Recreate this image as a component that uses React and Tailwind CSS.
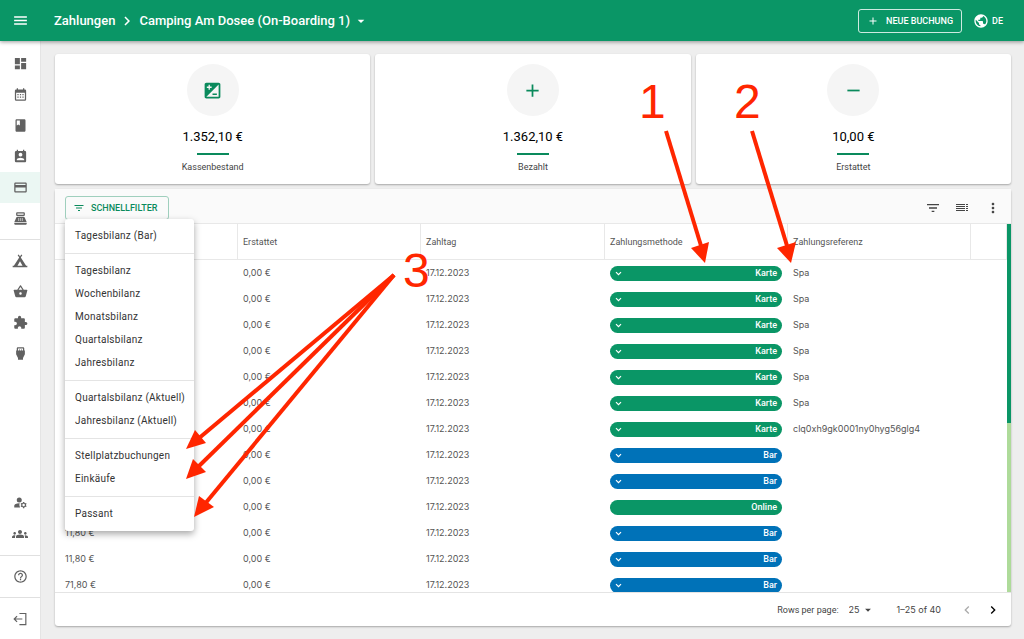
import {
  MdAdd,
  MdArrowDropDown,
  MdBook,
  MdChevronLeft,
  MdChevronRight,
  MdCreditCard,
  MdDashboard,
  MdExtension,
  MdFilterList,
  MdGroups,
  MdHelpOutline,
  MdIso,
  MdManageAccounts,
  MdMenu,
  MdMoreVert,
  MdPermContactCalendar,
  MdPointOfSale,
  MdPublic,
  MdRemove,
  MdSettingsInputHdmi,
  MdShoppingBasket,
} from "react-icons/md";
import clsx from "clsx";

function CalendarIcon({ size = 14 }) {
  return (
    <svg width={size} height={size} viewBox="0 0 24 24" fill="currentColor">
      <path d="M19 4h-1V2h-2v2H8V2H6v2H5a2 2 0 0 0-2 2v14a2 2 0 0 0 2 2h14a2 2 0 0 0 2-2V6a2 2 0 0 0-2-2Zm0 16H5V9h14v11Z" />
      <path d="M7 11h2v2H7zM11 11h2v2h-2zM15 11h2v2h-2zM7 15h2v2H7zM11 15h2v2h-2zM15 15h2v2h-2z" />
    </svg>
  );
}

function TentIcon({ size = 16 }) {
  return (
    <svg width={size} height={size} viewBox="0 0 24 24" fill="currentColor">
      <path d="m10.1 2.2 1.9 2.9 1.9-2.9 1.6 1.1-2.3 3.5L21.2 19H23v2.5H1V19h1.8l8-12.2-2.3-3.5 1.6-1.1ZM12 12.5 8.2 19h7.6L12 12.5Z" />
    </svg>
  );
}

function LogoutIcon({ size = 14 }) {
  return (
    <svg width={size} height={size} viewBox="0 0 24 24" fill="none" stroke="currentColor" strokeWidth="2">
      <path d="M11 2.5h11v19H11M16 12H2M7 7l-5 5 5 5" />
    </svg>
  );
}

function ColumnsIcon({ size = 14 }) {
  return (
    <svg width={size} height={size} viewBox="0 0 14 14" fill="currentColor">
      <path d="M1 3h9v1H1zM1 5h9v1H1zM1 7h9v1H1zM1 9h9v1H1zM11 3h2v1h-2zM11 5h2v1h-2zM11 7h2v1h-2zM11 9h2v1h-2z" />
    </svg>
  );
}

function ChevronIcon() {
  return (
    <svg width="7" height="7" viewBox="0 0 7 7" fill="none" stroke="currentColor" strokeWidth="1.2">
      <path d="m1 2.2 2.5 2.5L6 2.2" />
    </svg>
  );
}

const NAV_TOP = [
  { label: "Dashboard", icon: MdDashboard },
  { label: "Kalender", icon: CalendarIcon },
  { label: "Buchungen", icon: MdBook },
  { label: "Kontakte", icon: MdPermContactCalendar },
  { label: "Zahlungen", icon: MdCreditCard, active: true },
  { label: "Kasse", icon: MdPointOfSale },
];

const NAV_MIDDLE = [
  { label: "Stellplätze", icon: TentIcon, size: 16 },
  { label: "Artikel", icon: MdShoppingBasket },
  { label: "Erweiterungen", icon: MdExtension },
  { label: "Strom", icon: MdSettingsInputHdmi },
];

const NAV_BOTTOM = [
  { label: "Konto", icon: MdManageAccounts },
  { label: "Team", icon: MdGroups, size: 16 },
];

const STATS = [
  { label: "Kassenbestand", value: "1.352,10 €", icon: MdIso },
  { label: "Bezahlt", value: "1.362,10 €", icon: MdAdd },
  { label: "Erstattet", value: "10,00 €", icon: MdRemove },
];

const FILTER_GROUPS = [
  ["Tagesbilanz (Bar)"],
  ["Tagesbilanz", "Wochenbilanz", "Monatsbilanz", "Quartalsbilanz", "Jahresbilanz"],
  ["Quartalsbilanz (Aktuell)", "Jahresbilanz (Aktuell)"],
  ["Stellplatzbuchungen", "Einkäufe"],
  ["Passant"],
];

const ROWS = [
  { method: "Karte", reference: "Spa" },
  { method: "Karte", reference: "Spa" },
  { method: "Karte", reference: "Spa" },
  { method: "Karte", reference: "Spa" },
  { method: "Karte", reference: "Spa" },
  { method: "Karte", reference: "Spa" },
  { method: "Karte", reference: "clq0xh9gk0001ny0hyg56glg4" },
  { method: "Bar" },
  { method: "Bar" },
  { method: "Online" },
  { method: "Bar", paid: "11,80 €" },
  { method: "Bar", paid: "11,80 €" },
  { method: "Bar", paid: "71,80 €" },
];

function NavList({ items }) {
  return (
    <ul>
      {items.map(({ label, icon: Icon, active, size = 15 }) => (
        <li key={label}>
          <a
            href="#"
            aria-label={label}
            className={clsx("flex h-[31px] items-center justify-center", active && "bg-[#ebf7f3]")}
          >
            <Icon size={size} />
          </a>
        </li>
      ))}
    </ul>
  );
}

function Sidebar() {
  return (
    <nav className="flex w-[41px] shrink-0 flex-col border-r border-[#e4e4e4] bg-white text-[#616161]">
      <div className="pt-[7px] pb-[5px]">
        <NavList items={NAV_TOP} />
      </div>
      <div className="border-t border-[#e0e0e0] py-[5px]">
        <NavList items={NAV_MIDDLE} />
      </div>
      <div className="mt-auto py-1.5">
        <NavList items={NAV_BOTTOM} />
      </div>
      <div className="border-t border-[#e0e0e0] py-[5px]">
        <NavList items={[{ label: "Hilfe", icon: MdHelpOutline }]} />
      </div>
      <div className="border-t border-[#e0e0e0] py-[5px]">
        <NavList items={[{ label: "Abmelden", icon: LogoutIcon, size: 14 }]} />
      </div>
    </nav>
  );
}

function Header() {
  return (
    <header className="z-10 flex h-[41px] shrink-0 items-center bg-[#0a9666] pr-[21px] text-white shadow-[0_1px_4px_rgba(0,0,0,0.4)]">
      <button type="button" aria-label="Menü" className="flex w-[41px] justify-center">
        <MdMenu size={17} />
      </button>
      <h1 className="ml-[13px] text-[13px] font-medium">Zahlungen</h1>
      <MdChevronRight size={18} className="mx-[3px]" />
      <button type="button" className="flex items-center text-[13px] font-medium">
        Camping Am Dosee (On-Boarding 1)
        <MdArrowDropDown size={16} className="ml-[3px]" />
      </button>
      <button
        type="button"
        className="ml-auto flex h-6 items-center gap-[7px] rounded-[3px] border border-white/80 px-2 text-[9px] leading-4 font-medium"
      >
        <MdAdd size={12} />
        NEUE BUCHUNG
      </button>
      <button type="button" className="ml-[11px] flex items-center gap-[3px] text-[9px] leading-4 font-medium">
        <MdPublic size={16} />
        DE
      </button>
    </header>
  );
}

function StatCard({ label, value, icon: Icon }) {
  return (
    <section className="flex h-[130px] flex-1 flex-col items-center rounded-[3px] bg-white pt-[10px] shadow-[0_1px_2px_rgba(0,0,0,0.3)]">
      <div className="flex size-[52px] items-center justify-center rounded-full bg-[#f5f5f5] text-[#0a8a5c]">
        <Icon size={21} />
      </div>
      <p className="mt-[13px] text-[13px] leading-4 text-black">{value}</p>
      <div className="mt-2 h-[2px] w-8 bg-[#0a8a5c]" />
      <p className="mt-1.5 text-[9px] leading-3 text-[#444]">{label}</p>
    </section>
  );
}

function QuickFilter() {
  return (
    <div className="relative">
      <button
        type="button"
        className="flex h-6 w-[104px] items-center gap-1.5 rounded-[3px] border border-[#9fcfbd] pl-[7px] text-[9px] leading-4 font-medium text-[#0a8a5c]"
      >
        <MdFilterList size={12} />
        SCHNELLFILTER
      </button>
      <div
        role="menu"
        className="absolute top-[23px] left-0 z-10 w-[129px] divide-y divide-[#e4e4e4] rounded-[3px] bg-white shadow-[0_3px_7px_rgba(0,0,0,0.35)]"
      >
        {FILTER_GROUPS.map((group) => (
          <div key={group[0]} className="pt-1.5 pb-[5px]">
            {group.map((item) => (
              <button
                key={item}
                type="button"
                role="menuitem"
                className="flex h-[23px] w-full items-center pl-[10px] text-[10px] leading-4 whitespace-nowrap text-[#333] tracking-wide"
              >
                {item}
              </button>
            ))}
          </div>
        ))}
      </div>
    </div>
  );
}

function MethodChip({ method }) {
  return (
    <button
      type="button"
      className={clsx(
        "flex h-[15px] w-full items-center rounded-full px-[5px] font-['Roboto',sans-serif] text-[9px] leading-[15px] font-medium text-white",
        method === "Bar" ? "bg-[#0072b8]" : "bg-[#0a9666]",
      )}
    >
      {method !== "Online" && <ChevronIcon />}
      <span className="ml-auto">{method}</span>
    </button>
  );
}

function PaymentsTable() {
  return (
    <div className="flex min-h-0 flex-1">
      <div className="min-w-0 flex-1 overflow-hidden">
        <table className="w-full table-fixed border-separate border-spacing-0 text-left text-[9px] leading-4 text-[#555]">
          <thead>
            <tr className="h-9 [&>th]:border-r [&>th]:border-b [&>th]:border-[#e8e8e8] [&>th]:pl-[5px] [&>th]:font-normal">
              <th className="w-[183px]" aria-label="Bezahlt" />
              <th className="w-[183px]">Erstattet</th>
              <th className="w-[184px]">Zahltag</th>
              <th className="w-[183px]">Zahlungsmethode</th>
              <th className="w-[183px]">Zahlungsreferenz</th>
              <th aria-label="Aktionen" />
            </tr>
          </thead>
          <tbody className="font-['Inter',sans-serif]">
            {ROWS.map((row, i) => (
              <tr key={i} className="h-[26px]">
                <td className="pl-[10px]">{row.paid}</td>
                <td className="pl-[5px]">0,00 €</td>
                <td className="pl-[5px]">17.12.2023</td>
                <td className="pr-1.5 pl-[5px]">
                  <MethodChip method={row.method} />
                </td>
                <td className="pl-[5px]">{row.reference}</td>
                <td />
              </tr>
            ))}
          </tbody>
        </table>
      </div>
      <div className="w-1 bg-[#aedb9a]">
        <div className="h-[54%] bg-[#0a9666]" />
      </div>
    </div>
  );
}

function TableFooter() {
  return (
    <footer className="flex h-[34px] shrink-0 items-center justify-end border-t border-[#e4e4e4] pr-[10px] font-['Inter',sans-serif] text-[9px] leading-4 text-[#444]">
      <label htmlFor="rows" className="font-['Roboto',sans-serif]">
        Rows per page:
      </label>
      <div className="ml-2.5 flex items-center">
        <select id="rows" defaultValue="25" className="w-[12px] appearance-none">
          <option>25</option>
        </select>
        <MdArrowDropDown size={14} />
      </div>
      <span className="ml-[22px]">1–25 of 40</span>
      <button type="button" aria-label="Zurück" disabled className="ml-[18px] text-[#aaa]">
        <MdChevronLeft size={16} />
      </button>
      <button type="button" aria-label="Weiter" className="ml-2.5 text-black">
        <MdChevronRight size={16} />
      </button>
    </footer>
  );
}

const ARROWS = [
  { from: [666, 131], to: [702, 249], head: "705,263 691,248 709,242" },
  { from: [752, 131], to: [788, 249], head: "791,263 777,248 796,242" },
  { from: [394, 275], to: [198, 439], head: "186,449 195,430 206,443" },
  { from: [394, 275], to: [198, 467], head: "186,479 193,459 206,472" },
  { from: [394, 275], to: [204, 505], head: "194,517 199,496 214,507" },
];

function Annotations() {
  return (
    <svg
      width="1024"
      height="639"
      fill="#ff2600"
      className="pointer-events-none absolute top-0 left-0 z-20 font-['Liberation_Sans',sans-serif] text-[48px]"
    >
      {ARROWS.map(({ from, to, head }) => (
        <g key={head}>
          <line x1={from[0]} y1={from[1]} x2={to[0]} y2={to[1]} stroke="#ff2600" strokeWidth="4" />
          <polygon points={head} />
        </g>
      ))}
      <text x="639" y="118">1</text>
      <text x="734" y="118">2</text>
      <text x="403" y="287">3</text>
    </svg>
  );
}

export default function App() {
  return (
    <div className="relative flex h-screen flex-col overflow-hidden bg-[#eee] font-['Roboto',sans-serif]">
      <Header />
      <div className="flex min-h-0 flex-1">
        <Sidebar />
        <main className="flex min-w-0 flex-1 flex-col gap-[5px] py-[13px] pr-[13px] pl-[14px]">
          <div className="flex shrink-0 gap-[5px]">
            {STATS.map((stat) => (
              <StatCard key={stat.label} {...stat} />
            ))}
          </div>
          <section className="flex min-h-0 flex-1 flex-col rounded-[3px] bg-white shadow-[0_1px_2px_rgba(0,0,0,0.3)]">
            <div className="flex h-[35px] shrink-0 items-center border-b border-[#e8e8e8] bg-[#fafafa] pt-[3px] pr-[10px] pl-[10px] text-[#444]">
              <QuickFilter />
              <button type="button" aria-label="Filter" className="ml-auto">
                <MdFilterList size={16} />
              </button>
              <button type="button" aria-label="Spalten" className="ml-[14px]">
                <ColumnsIcon size={14} />
              </button>
              <button type="button" aria-label="Mehr" className="ml-4">
                <MdMoreVert size={16} />
              </button>
            </div>
            <PaymentsTable />
            <TableFooter />
          </section>
        </main>
      </div>
      <Annotations />
    </div>
  );
}
